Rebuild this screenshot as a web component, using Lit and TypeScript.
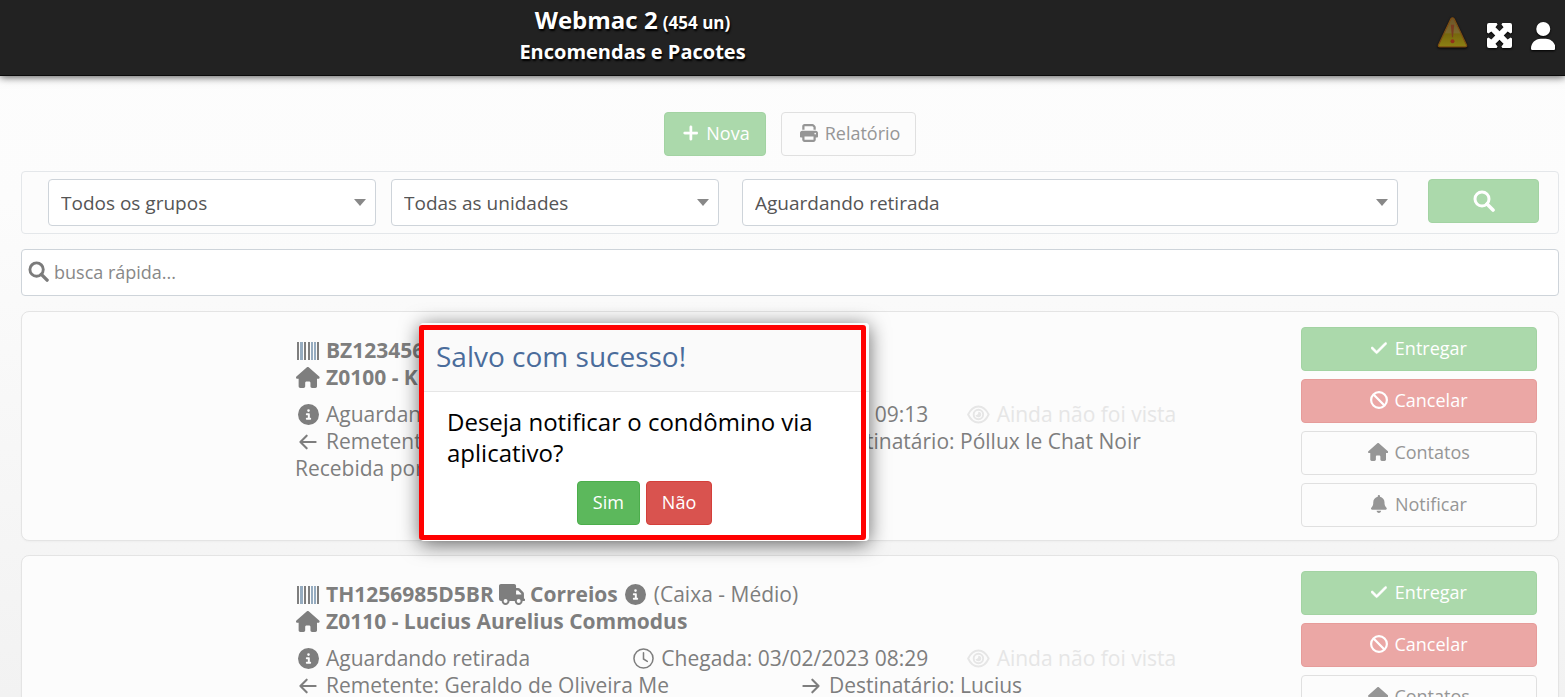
import { LitElement, html, css, svg, TemplateResult } from "lit";
import { customElement, property } from "lit/decorators.js";

const SHAPES: Record<string, { box: string; art: TemplateResult }> = {
  plus: { box: "0 0 448 512", art: svg`<path d="M256 80c0-17.7-14.3-32-32-32s-32 14.3-32 32V224H48c-17.7 0-32 14.3-32 32s14.3 32 32 32H192V432c0 17.7 14.3 32 32 32s32-14.3 32-32V288H400c17.7 0 32-14.3 32-32s-14.3-32-32-32H256V80z" stroke="currentColor" stroke-width="14"/>` },
  print: { box: "0 0 512 512", art: svg`<path d="M128 0C92.7 0 64 28.7 64 64v96h64V64H354.7L384 93.3V160h64V93.3c0-17-6.7-33.3-18.7-45.3L400 18.7C388 6.7 371.7 0 354.7 0H128zM384 352v32 64H128V384 368 352H384zm64 32h32c17.7 0 32-14.3 32-32V256c0-35.3-28.7-64-64-64H64c-35.3 0-64 28.7-64 64v96c0 17.7 14.3 32 32 32H64v64c0 35.3 28.7 64 64 64H384c35.3 0 64-28.7 64-64V384zM432 248a24 24 0 1 1 0 48 24 24 0 1 1 0-48z"/>` },
  home: { box: "0 0 576 512", art: svg`<path d="M575.8 255.5c0 18-15 32.1-32 32.1h-32l.7 160.2c0 2.7-.2 5.4-.5 8.1V472c0 22.1-17.9 40-40 40H456c-1.1 0-2.2 0-3.3-.1c-1.4 .1-2.8 .1-4.2 .1H416 392c-22.1 0-40-17.9-40-40V448 384c0-17.7-14.3-32-32-32H256c-17.7 0-32 14.3-32 32v64 24c0 22.1-17.9 40-40 40H160 128.1c-1.5 0-3-.1-4.5-.2c-1.2 .1-2.4 .2-3.6 .2H104c-22.1 0-40-17.9-40-40V360c0-.9 0-1.9 .1-2.8V287.6H32c-18 0-32-14-32-32.1c0-9 3-17 10-24L266.4 8c7-7 15-8 22-8s15 2 21 7L564.8 231.5c8 7 12 15 11 24z"/>` },
  user: { box: "0 0 448 512", art: svg`<path d="M224 256A128 128 0 1 0 224 0a128 128 0 1 0 0 256zm-45.7 48C79.8 304 0 383.8 0 482.3C0 498.7 13.3 512 29.7 512H418.3c16.4 0 29.7-13.3 29.7-29.7C448 383.8 368.2 304 269.7 304H178.3z"/>` },
  check: { box: "0 0 448 512", art: svg`<path d="M438.6 105.4c12.5 12.5 12.5 32.8 0 45.3l-256 256c-12.5 12.5-32.8 12.5-45.3 0l-128-128c-12.5-12.5-12.5-32.8 0-45.3s32.8-12.5 45.3 0L160 338.7 393.4 105.4c12.5-12.5 32.8-12.5 45.3 0z" stroke="currentColor" stroke-width="14"/>` },
  ban: { box: "0 0 512 512", art: svg`<path d="M367.2 412.5L99.5 144.8C77.1 176.1 64 214.5 64 256c0 106 86 192 192 192c41.5 0 79.9-13.1 111.2-35.5zm45.3-45.3C434.9 335.9 448 297.5 448 256c0-106-86-192-192-192c-41.5 0-79.9 13.1-111.2 35.5L412.5 367.2zM0 256a256 256 0 1 1 512 0A256 256 0 1 1 0 256z"/>` },
  bell: { box: "0 0 448 512", art: svg`<path d="M224 0c-17.7 0-32 14.3-32 32V51.2C119 66 64 130.6 64 208v18.8c0 47-17.3 92.4-48.5 127.6l-7.4 8.3c-8.4 9.4-10.4 22.9-5.3 34.4S19.4 416 32 416H416c12.6 0 24-7.4 29.2-18.9s3.1-25-5.3-34.4l-7.4-8.3C401.3 319.2 384 273.9 384 226.8V208c0-77.4-55-142-128-156.8V32c0-17.7-14.3-32-32-32zm45.3 493.3c12-12 18.7-28.3 18.7-45.3H224 160c0 17 6.7 33.3 18.7 45.3s28.3 18.7 45.3 18.7s33.3-6.7 45.3-18.7z"/>` },
  info: { box: "0 0 512 512", art: svg`<path d="M256 512A256 256 0 1 0 256 0a256 256 0 1 0 0 512zM216 336h24V272H216c-13.3 0-24-10.7-24-24s10.7-24 24-24h48c13.3 0 24 10.7 24 24v88h8c13.3 0 24 10.7 24 24s-10.7 24-24 24H216c-13.3 0-24-10.7-24-24s10.7-24 24-24zm40-208a32 32 0 1 1 0 64 32 32 0 1 1 0-64z"/>` },
  truck: { box: "0 0 640 512", art: svg`<path d="M48 0C21.5 0 0 21.5 0 48V368c0 26.5 21.5 48 48 48H64c0 53 43 96 96 96s96-43 96-96H384c0 53 43 96 96 96s96-43 96-96h32c17.7 0 32-14.3 32-32s-14.3-32-32-32V288 256 237.3c0-17-6.7-33.3-18.7-45.3L512 114.7c-12-12-28.3-18.7-45.3-18.7H416V48c0-26.5-21.5-48-48-48H48zM416 160h50.7L544 237.3V256H416V160zM112 416a48 48 0 1 1 96 0 48 48 0 1 1 -96 0zm368-48a48 48 0 1 1 0 96 48 48 0 1 1 0-96z"/>` },
  search: { box: "0 0 22 22", art: svg`<g fill="none" stroke="currentColor" stroke-width="3"><circle cx="9" cy="9" r="7"/><path d="M14 14l6 6" stroke-width="3.6" stroke-linecap="round"/></g>` },
  left: { box: "0 0 20 20", art: svg`<path d="M18.500 10H2M8.500 3L1.600 10l6.900 7" fill="none" stroke="currentColor" stroke-width="2.300" stroke-linecap="round" stroke-linejoin="round"/>` },
  right: { box: "0 0 20 20", art: svg`<path d="M1.500 10H18M11.500 3L18.400 10l-6.900 7" fill="none" stroke="currentColor" stroke-width="2.300" stroke-linecap="round" stroke-linejoin="round"/>` },
  clock: { box: "0 0 22 22", art: svg`<g fill="none" stroke="currentColor" stroke-width="1.600" stroke-linecap="round"><circle cx="11" cy="11" r="10"/><path d="M11 5v6.500l4 2.500"/></g>` },
  eye: { box: "0 0 24 20", art: svg`<g fill="none" stroke="currentColor" stroke-width="2"><path d="M1.200 10C4 4 8 1.500 12 1.500S20 4 22.800 10C20 16 16 18.500 12 18.500S4 16 1.200 10z"/><circle cx="12" cy="10" r="5"/></g><path d="M12 7a3 3 0 1 1-3 3.500c2 0 3-1 3-3.500z"/>` },
  barcode: { box: "0 0 22 18", art: svg`<path d="M0 0h2v18H0zM7 0h2v18H7zM11 0h2v18h-2zM20 0h2v18h-2z"/><path fill="#96acc0" d="M3 0h2v18H3zM5 0h1v18H5zM14 0h2v18h-2zM17 0h2v18h-2z"/>` },
  expand: { box: "0 0 26 26", art: svg`<path d="M2 0h8l1 1.500L8.800 4.500 13 8.600l4.200-4.100L15 1.500 16 0h8a2 2 0 0 1 2 2v8l-1.500 1-3-2.200L17.400 13l4.100 4.200 3-2.200 1.500 1v8a2 2 0 0 1-2 2h-8l-1-1.500 2.200-3L13 17.400l-4.200 4.100 2.200 3L10 26H2a2 2 0 0 1-2-2v-8l1.500-1 3 2.200L8.600 13 4.500 8.800l-3 2.200L0 10V2a2 2 0 0 1 2-2z"/>` },
  caret: { box: "0 0 12 7", art: svg`<path d="M0 0h12L6 7z"/>` },
  warning: { box: "0 0 30 30", art: svg`<defs><linearGradient id="w" x1="0" y1="0" x2="0" y2="1"><stop offset="0" stop-color="#6b5428"/><stop offset=".5" stop-color="#7c6a2c"/><stop offset=".56" stop-color="#77670d"/><stop offset="1" stop-color="#8d8113"/></linearGradient></defs><path d="M13.400 1.800q1.600-2 3.200 0L28.600 27q.6 2-1.400 2H2.800q-2 0-1.400-2z" fill="url(#w)" stroke="#7b4c14" stroke-width="1.200"/><path d="M13.400 7.500h3.200L15.500 19.500h-1z" fill="#7a3b20"/><circle cx="15" cy="23.500" r="1.900" fill="#92301a"/>` },
};

const icon = (name: string) => html`<svg class="icon ${name}" viewBox=${SHAPES[name].box} aria-hidden="true">${SHAPES[name].art}</svg>`;

const shared = css`
  * { box-sizing: border-box; }
  .icon { display: block; flex: none; height: 18px; fill: currentColor; }
  button {
    display: inline-flex; align-items: center; justify-content: center; gap: 8px;
    height: 44px; padding: 0 15px 2px; border: 1px solid #e0e0e0; border-radius: 4px;
    background: #fcfcfc; color: #969696; font: inherit; font-size: 18px; cursor: pointer;
  }
  .green { background: #abd9ab; border-color: #a3d3a3; color: #fff; }
  .red { background: #eba7a5; border-color: #e69c9a; color: #fff; }
`;

interface Parcel {
  code: string;
  carrier?: string;
  kind?: string;
  unit: string;
  arrival: string;
  sender: string;
  recipient: string;
  receiver: string;
}

@customElement("parcel-card")
export class ParcelCard extends LitElement {
  @property({ attribute: false }) parcel!: Parcel;

  static styles = [shared, css`
    :host {
      display: grid; grid-template-columns: 273px minmax(0, 1fr) 236px;
      box-sizing: border-box; padding: 15px 21px 13px 0; border: 1px solid #e4e4e4; border-radius: 8px;
      background: #fcfcfc; box-shadow: 0 1px 2px #00000008;
    }
    .main { grid-column: 2; padding-top: 10px; font-size: 21px; line-height: 27px; color: #7e7e7e; white-space: nowrap; }
    .line { display: flex; align-items: center; gap: 5px; height: 27px; }
    .strong { font-weight: 700; }
    .strong .light { font-weight: 400; }
    .slot { display: flex; justify-content: center; width: 26px; flex: none; }
    .status { display: grid; grid-template-columns: repeat(3, minmax(0, 1fr)); margin-top: 10px; }
    .people { display: grid; grid-template-columns: repeat(2, minmax(0, 1fr)); }
    .unseen { color: #e6e6e6; }
    .home, .truck { height: 21px; }
    .info, .clock { height: 21px; }
    .eye { height: 19px; }
    .actions { display: flex; flex-direction: column; gap: 8px; }
    .actions .home { height: 18px; }
    .actions .home, .actions .ban { margin-right: -2px; }
  `];

  render() {
    const p = this.parcel;
    return html`
      <div class="main">
        <div class="line strong"><span class="slot">${icon("barcode")}</span>${p.code}
          ${p.carrier ? html`${icon("truck")}<span>${p.carrier}</span><span class="slot">${icon("info")}</span><span class="light">${p.kind}</span>` : ""}</div>
        <div class="line strong"><span class="slot">${icon("home")}</span>${p.unit}</div>
        <div class="status">
          <div class="line"><span class="slot">${icon("info")}</span>Aguardando retirada</div>
          <div class="line"><span class="slot">${icon("clock")}</span>Chegada: ${p.arrival}</div>
          <div class="line unseen"><span class="slot">${icon("eye")}</span>Ainda não foi vista</div>
        </div>
        <div class="people">
          <div class="line"><span class="slot">${icon("left")}</span>Remetente: ${p.sender}</div>
          <div class="line"><span class="slot">${icon("right")}</span>Destinatário: ${p.recipient}</div>
        </div>
        <div class="line">Recebida por ${p.receiver}</div>
      </div>
      <div class="actions">
        <button class="green">${icon("check")}Entregar</button>
        <button class="red">${icon("ban")}Cancelar</button>
        <button>${icon("home")}Contatos</button>
        <button>${icon("bell")}Notificar</button>
      </div>`;
  }
}

@customElement("app-root")
export class AppRoot extends LitElement {
  private parcels: Parcel[] = [
    { code: "BZ123456", unit: "Z0100 - K", arrival: "03/02/2023 09:13", sender: "", recipient: "Póllux le Chat Noir", receiver: "" },
    { code: "TH1256985D5BR", carrier: "Correios", kind: "(Caixa - Médio)", unit: "Z0110 - Lucius Aurelius Commodus", arrival: "03/02/2023 08:29", sender: "Geraldo de Oliveira Me", recipient: "Lucius", receiver: "" },
  ];

  static styles = [shared, css`
    :host {
      display: block; position: relative; height: 100vh; overflow: hidden;
      background: linear-gradient(#fdfdfd 0, #fcfcfc 200px, #f2f2f2 100%);
      font-family: "Open Sans", sans-serif; font-size: 18px; color: #555;
    }
    header {
      display: flex; align-items: center; height: 76px; padding: 0 10px 4px 0; background: #222;
      border-bottom: 1px solid #0b0b0b; box-shadow: 0 1px 8px #000000b0; color: #fff;
    }
    .title { flex: 1; margin: 0; padding-top: 3px; text-align: center; font-size: 20px; line-height: 30px; font-weight: 700; text-shadow: 1px 2px 2px #000; }
    .title .name { font-size: 24px; line-height: 24px; }
    .title .count { font-size: 17px; line-height: 24px; }
    .tools { display: flex; align-items: center; justify-content: flex-end; width: 290px; gap: 19px; }
    .tools button { height: auto; padding: 0; border: 0; background: none; color: #fff; }
    .tools .icon { filter: drop-shadow(0 1px 1px #000); }
    .tools .warning { height: 31px; margin-bottom: 6px; }
    .tools .expand { height: 25px; }
    .tools .user { height: 28px; }
    main { display: flex; flex-direction: column; gap: 15px; padding: 36px 6px 0 21px; }
    .top { display: flex; justify-content: center; gap: 15px; }
    .top button { padding: 0 15px 2px 18px; }
    .top .print { margin-right: -1px; }
    .filters { display: flex; align-items: flex-start; padding: 7px 19px 7px 26px; border: 1px solid #e4e7ea; border-radius: 4px; background: #fcfcfc; }
    .pair { display: flex; flex: 671 1 0; gap: 15px; }
    .pick { display: grid; align-items: center; flex: 1 1 0; }
    .wide { flex: 656 1 0; margin: 0 30px 0 23px; }
    .pick > * { grid-area: 1 / 1; }
    .pick .icon { justify-self: end; height: 7px; margin-right: 10px; color: #888; pointer-events: none; }
    select {
      appearance: none; width: 100%; height: 47px; padding: 0 30px 0 12px; border: 1px solid #ced4da;
      border-radius: 4px; background: #fff; font: inherit; font-size: 19px; color: #555;
    }
    .go { width: 111px; padding-bottom: 0; }
    .go .search { height: 22px; }
    .quick { display: flex; align-items: center; gap: 5px; height: 47px; padding: 0 6px 2px; border: 1px solid #ced4da; border-radius: 4px; background: #fff; color: #7b7b7b; }
    .quick .search { height: 21px; }
    .quick input { flex: 1; padding: 0; border: 0; outline: 0; background: none; font: inherit; color: inherit; }
    .quick input::placeholder { color: #888; opacity: 1; }
    .list { display: flex; flex-direction: column; gap: 14px; }
    .modal {
      position: absolute; left: 420px; top: 323px; width: 449px; border-radius: 4px;
      background: #fff; color: #000; box-shadow: 0 3px 20px #00000099;
    }
    .modal h2 { margin: 0; height: 69px; padding: 0 16px; border-bottom: 1px solid #e6e6e6; border-radius: 4px 4px 0 0; background: #fafafa; color: #4a6c9b; font-size: 28px; line-height: 66px; font-weight: 400; }
    .modal p { margin: 0; padding: 14px 27px 13px; font-size: 24px; line-height: 31px; }
    .answers { display: flex; justify-content: center; gap: 6px; padding-bottom: 16px; }
    .answers .green { background: #5cb85c; border-color: #4cae4c; }
    .answers .red { background: #d9534f; border-color: #d43f3a; }
    .frame { position: absolute; inset: 2px 3px 1px -1px; border: 5px solid #f00; border-radius: 3px; pointer-events: none; }
  `];

  render() {
    return html`
      <header>
        <h1 class="title"><span class="name">Webmac 2</span> <span class="count">(454 un)</span><br>Encomendas e Pacotes</h1>
        <div class="tools">
          <button aria-label="Avisos">${icon("warning")}</button>
          <button aria-label="Tela cheia">${icon("expand")}</button>
          <button aria-label="Perfil">${icon("user")}</button>
        </div>
      </header>
      <main>
        <div class="top">
          <button class="green">${icon("plus")}Nova</button>
          <button>${icon("print")}Relatório</button>
        </div>
        <div class="filters">
          <div class="pair">
            <div class="pick"><select aria-label="Grupo"><option>Todos os grupos</option></select>${icon("caret")}</div>
            <div class="pick"><select aria-label="Unidade"><option>Todas as unidades</option></select>${icon("caret")}</div>
          </div>
          <div class="pick wide"><select aria-label="Situação"><option>Aguardando retirada</option></select>${icon("caret")}</div>
          <button class="green go" aria-label="Buscar">${icon("search")}</button>
        </div>
        <label class="quick">${icon("search")}<input type="text" placeholder="busca rápida..." aria-label="busca rápida"></label>
        <div class="list">
          ${this.parcels.map((p) => html`<parcel-card .parcel=${p}></parcel-card>`)}
        </div>
      </main>
      <div class="modal" role="dialog" aria-labelledby="saved">
        <h2 id="saved">Salvo com sucesso!</h2>
        <p>Deseja notificar o condômino via aplicativo?</p>
        <div class="answers"><button class="green">Sim</button><button class="red">Não</button></div>
        <div class="frame"></div>
      </div>`;
  }
}
